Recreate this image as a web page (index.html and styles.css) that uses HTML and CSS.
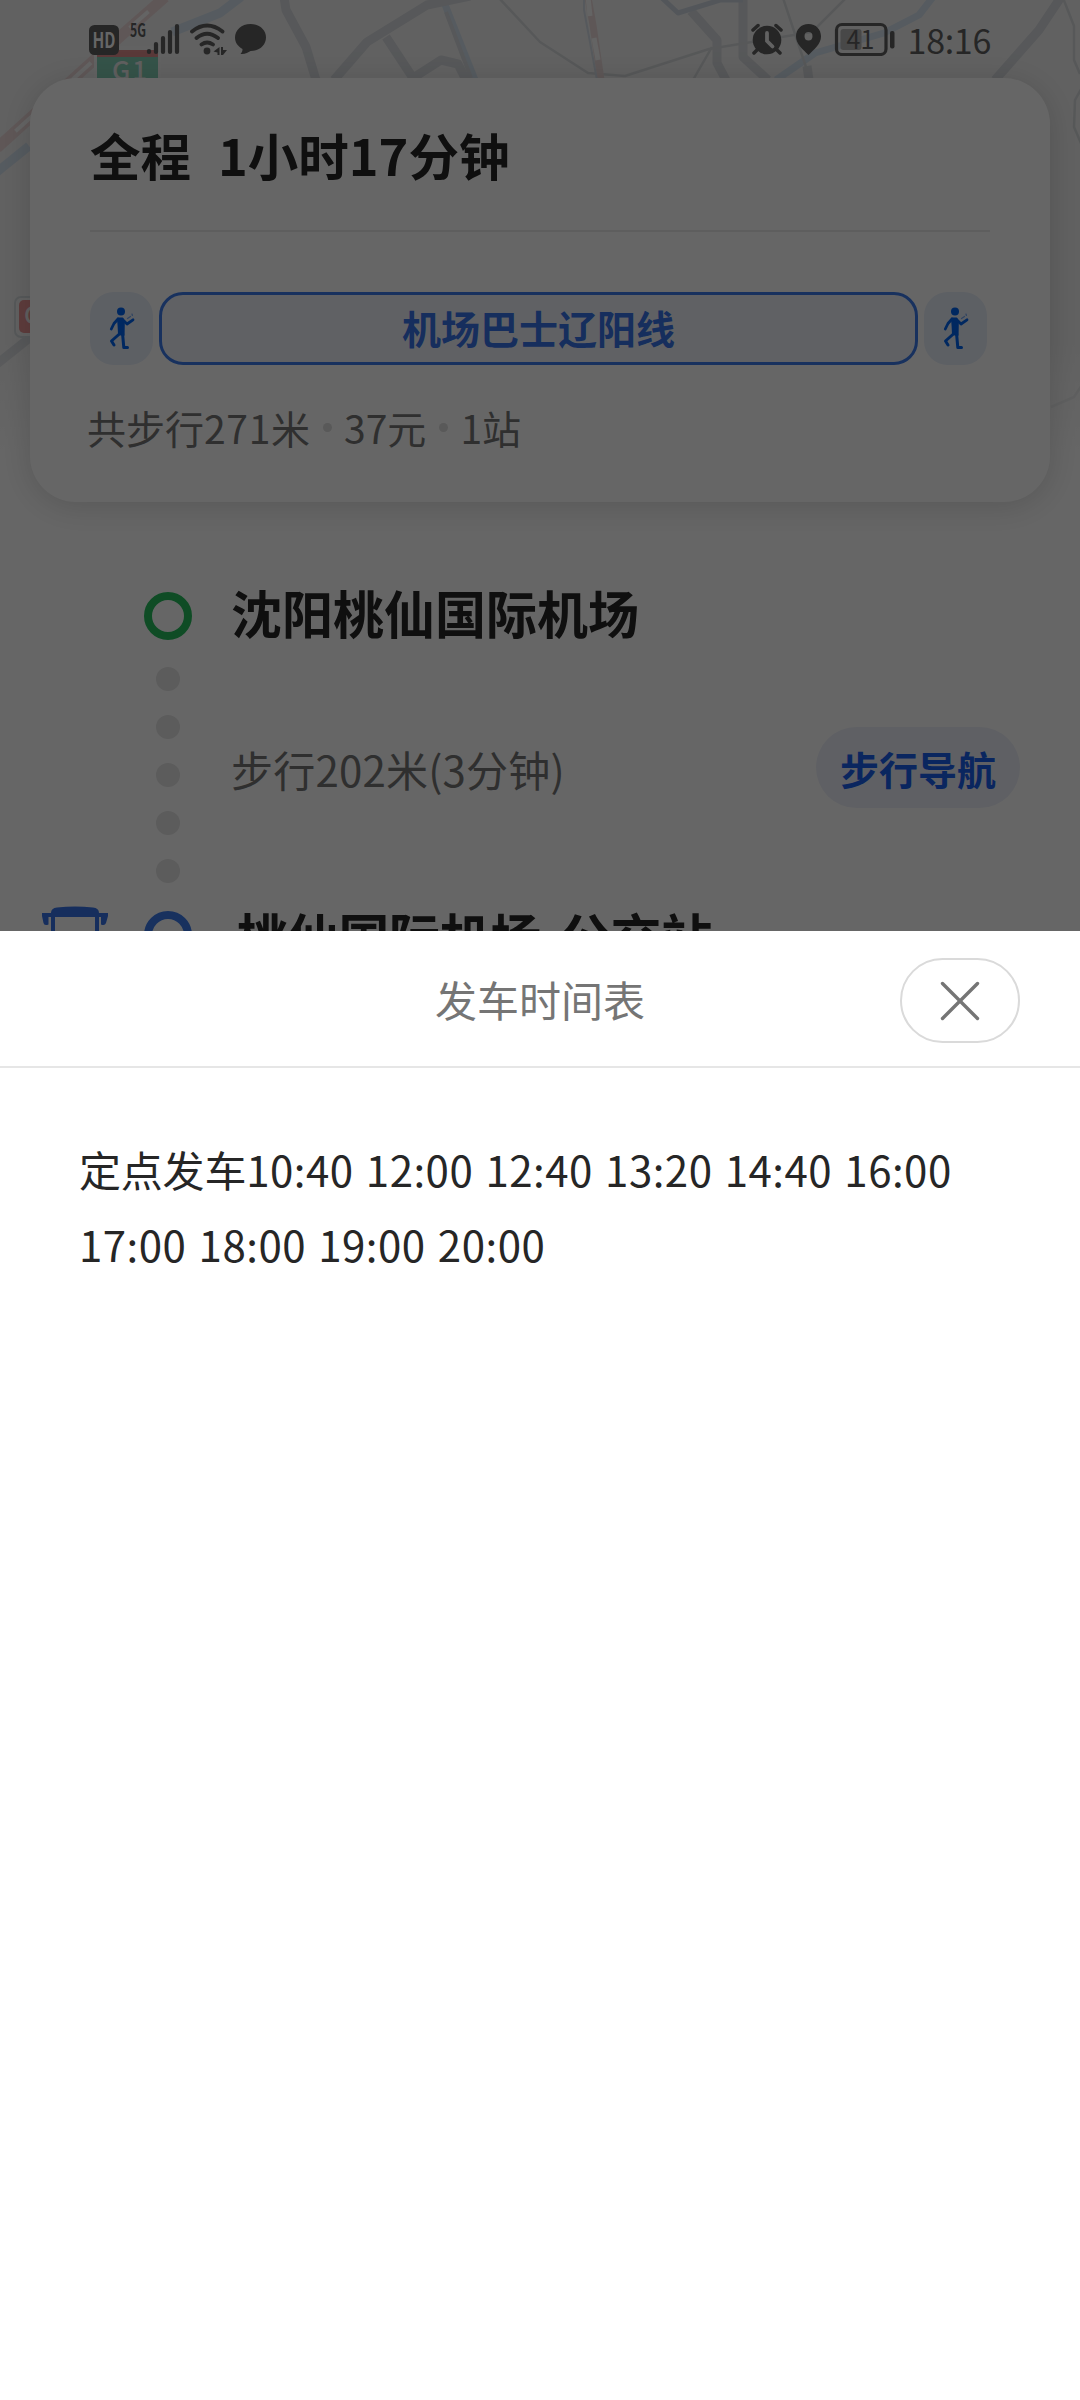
FILE: index.html
```html
<!DOCTYPE html>
<html lang="zh-CN">
<head>
<meta charset="utf-8">
<title>发车时间表</title>
<link rel="stylesheet" href="styles.css">
</head>
<body>
<svg width="0" height="0" class="defs">
  <symbol id="walk" viewBox="0 0 26 43">
    <g fill="currentColor" stroke="currentColor" stroke-linecap="round" stroke-linejoin="round">
      <circle cx="12" cy="4.600" r="4" stroke="none"/>
      <path d="M9 11.500L13.500 11.500L14.800 16L14.600 28L10 27L9.600 19Z" stroke-width="2"/>
      <path d="M9 12L5 16.500L2.300 22" fill="none" stroke-width="2.800"/>
      <path d="M13.500 12.500L18 17L24 12.800" fill="none" stroke-width="2.800"/>
      <path d="M11.500 26L2.500 34L5 38" fill="none" stroke-width="3"/>
      <path d="M13.500 26L14.800 40.500L18.500 40.500" fill="none" stroke-width="3"/>
      <path d="M18.500 11.500L21.500 9.500M23 7L23.400 8.500" fill="none" stroke-width="1.200" opacity=".5"/>
    </g>
  </symbol>
</svg>
<div class="screen">
  <svg class="map" width="1080" height="450" viewBox="0 0 1080 450" fill="none" stroke-linejoin="round">
    <defs>
      <linearGradient id="fade" x1="0" y1="0" x2="0" y2="1">
        <stop offset="0" stop-color="#fff" stop-opacity="0"/>
        <stop offset="1" stop-color="#fff"/>
      </linearGradient>
    </defs>
    <rect width="1080" height="450" fill="#f3f3f3"/>
    <g stroke="#d6e4f0">
      <path d="M241 -3L220 13L172 32M29 146L-3 172" stroke-width="9"/>
      <path d="M442 -3L475 80" stroke-width="7"/>
      <path d="M933 -3L919 15L884 33L815 53L776 80" stroke-width="7"/>
    </g>
    <g stroke="#d9dce0" stroke-width="9">
      <path d="M284 -3L286 10L306 47L316 80"/>
      <path d="M334 80L367 42L427 5L470 -4"/>
      <path d="M386 37L413 78L441 60L458 64L466 80"/>
      <path d="M446 12L471 78" stroke-width="4"/>
      <path d="M691 11L717 40V63L726 80"/>
      <path d="M743 -3V57L768 80"/>
      <path d="M1061 -3L1039 30L995 80"/>
      <path d="M807 66L809 80"/>
      <path d="M-3 364L32 336"/>
    </g>
    <path d="M662 -2L678 13L720 0L743 0" stroke="#cfd8e2" stroke-width="5"/>
    <g stroke="#d9dcde" stroke-width="2.500">
      <path d="M499 -2L540 42L588 73L625 76L709 49L812 32L846 -2"/>
      <path d="M693 80L712 47M783 -2L807 70M1063 -2L1074 26V60L1080 74M1084 84L1075 100L1074 127L1084 150M1051 407L1074 397L1084 382"/>
    </g>
    <g>
      <path d="M165 -3L124 33L83 70L-3 148" stroke="#eedada" stroke-width="11"/>
      <path d="M165 -3L124 33L83 70L-3 148" stroke="#fafafa" stroke-width="4" stroke-dasharray="25 52" stroke-dashoffset="-22"/>
      <path d="M588 -3L593 25L601 80" stroke="#eadada" stroke-width="7"/>
      <path d="M588 -3L590 16M594 38L598 60" stroke="#fafafa" stroke-width="5"/>
      <path d="M584 -3V10L597 80" stroke="#d7dfe8" stroke-width="2"/>
    </g>
    <rect x="94" y="46" width="67" height="40" fill="#f5f5f5"/>
    <rect x="97" y="50" width="61" height="8" fill="#e08e8e"/>
    <rect x="97" y="57" width="61" height="28" fill="#84d0b6"/>
    <text x="112" y="80" class="road-label" fill="#eee">G1</text>
    <rect x="15" y="297" width="40" height="40" rx="6" fill="#f4f4f4" stroke="#d7dde0" stroke-width="2"/>
    <rect x="19" y="300" width="34" height="33" rx="5" fill="#ea9696"/>
    <text x="24" y="324" class="road-label small" fill="#eee">G</text>
    <rect y="340" width="1080" height="110" fill="url(#fade)"/>
  </svg>

  <main class="page">
    <section class="card">
      <h1 class="total"><span>全程</span><span>1小时17分钟</span></h1>
      <div class="segments">
        <div class="walk-chip"><svg width="26" height="43"><use href="#walk"/></svg></div>
        <div class="bus-chip">机场巴士辽阳线</div>
        <div class="walk-chip"><svg width="26" height="43"><use href="#walk"/></svg></div>
      </div>
      <div class="summary"><span>共步行<b>271</b>米</span><i></i><span>37元</span><i></i><span>1站</span></div>
    </section>

    <section class="route">
      <div class="rail">
        <span class="node start"></span>
        <span class="dot"></span><span class="dot"></span><span class="dot"></span><span class="dot"></span><span class="dot"></span>
        <span class="node stop"></span>
      </div>
      <svg class="bus-icon" width="66" height="60" viewBox="0 0 66 60">
        <path d="M9 7Q9 2 15 1.500Q33 -.5 51 1.500Q57 2 57 7H66V10L64 17Q63 20 59 18.500V11H57V56H53V11H13V56H9V11H6.500V18.500Q2 20 1.500 17L0 10V7Z" fill="#3874e8"/>
      </svg>
      <div class="stops">
        <h2>沈阳桃仙国际机场</h2>
        <div class="walk-row">
          <span>步行202米(3分钟)</span>
          <button class="nav-btn">步行导航</button>
        </div>
        <h2 class="second">桃仙国际机场-公交站</h2>
      </div>
    </section>
  </main>

  <div class="mask"></div>

  <header class="status">
    <svg width="180" height="36" viewBox="0 0 180 36" fill="#262626">
      <rect x="0" y="5" width="30" height="30" rx="5.500"/>
      <text x="15" y="27.500" class="hd" text-anchor="middle" textLength="23" lengthAdjust="spacingAndGlyphs">HD</text>
      <text x="41" y="17" class="five-g" textLength="16" lengthAdjust="spacingAndGlyphs">5G</text>
      <g stroke="#262626" stroke-width="4.200" stroke-linecap="round" fill="none">
        <path d="M60 31V32M67 24V32M74 18V32M81 12V32M88 6V32"/>
        <path d="M103 11.500Q118 -.5 133.500 11.500M107.500 18Q118 9.500 129 18M112.500 24.500Q118 20.500 124 24.500" stroke-width="3.800"/>
      </g>
      <circle cx="118" cy="31" r="3.400"/>
      <path d="M124.500 31.500L130.500 27V35H128.500V32.500ZM132 27H134V30L138 30L134 35H132Z"/>
      <path d="M161.500 4C170.500 4 177 10 177 17.500C177 25 170.500 31 161.500 31C159 32.500 156 34.500 151.500 34C153 32.500 153.500 31 153.500 29C149 26.500 146 22.500 146 17.500C146 10 152.500 4 161.500 4Z"/>
    </svg>
    <div class="status-right">
      <svg width="145" height="36" viewBox="0 0 145 36" fill="#262626">
        <circle cx="16" cy="20" r="14.300"/>
        <path d="M2 10L7 5.500M25 5.500L30 10M6 30L3 33M26 30L29 33" stroke="#262626" stroke-width="3.500" stroke-linecap="round"/>
        <path d="M16 13V21L21.500 26.500" fill="none" stroke="#626262" stroke-width="3.800" stroke-linecap="round"/>
        <path fill-rule="evenodd" d="M57.500 4C65 4 70 9.500 70 16.500C70 24 63 29.500 57.500 35C52 29.500 45 24 45 16.500C45 9.500 50 4 57.500 4ZM57.500 12A4 4.200 0 1 0 57.500 20.400A4 4.200 0 1 0 57.500 12Z"/>
        <rect x="85.500" y="4.500" width="49.500" height="30" rx="5.500" fill="none" stroke="#262626" stroke-width="3.200"/>
        <rect x="89.500" y="9" width="21" height="21" rx="3" fill="#484848"/>
        <rect x="139" y="11" width="4.500" height="17.500" rx="2"/>
        <text x="95.500" y="29" class="battery">41</text>
      </svg>
      <time>18:16</time>
    </div>
  </header>

  <section class="sheet">
    <div class="sheet-head">
      <h3>发车时间表</h3>
      <button class="close" aria-label="关闭">
        <svg width="40" height="40" viewBox="0 0 40 40"><path d="M2.500 2.500L37.500 37.500M37.500 2.500L2.500 37.500" stroke="#757575" stroke-width="3.400" stroke-linecap="round"/></svg>
      </button>
    </div>
    <p class="times"><span>定点发车</span>10:40 12:00 12:40 13:20 14:40 16:00 17:00 18:00 19:00 20:00</p>
  </section>
</div>
</body>
</html>
```
FILE: styles.css
```css
* { box-sizing: border-box; margin: 0; padding: 0; }
body { background: #fff; font-family: "Noto Sans CJK SC", "Noto Sans", sans-serif; }
.defs { position: absolute; }
button { font: inherit; border: 0; }
.screen {
  position: relative;
  width: 1080px;
  height: 2400px;
  overflow: hidden;
  display: flex;
  flex-direction: column;
  background: #fff;
}
.map { position: absolute; top: 0; left: 0; }
.road-label { font-size: 26px; font-weight: 500; letter-spacing: 2px; }
.road-label.small { font-size: 24px; }
.page { position: relative; height: 931px; padding: 78px 30px 0; overflow: hidden; }

.card {
  height: 424px;
  padding: 0 60px;
  border-radius: 46px;
  background: #fff;
  box-shadow: 0 4px 32px rgba(0, 0, 0, .15);
}
.total {
  display: flex;
  gap: 27px;
  height: 154px;
  border-bottom: 2px solid #ececec;
  font-size: 50.5px;
  font-weight: 700;
  line-height: 152px;
  color: #262626;
}
.segments { display: flex; gap: 6px; height: 73px; margin-top: 60px; padding-right: 3px; }
.walk-chip {
  flex: none;
  display: flex;
  align-items: center;
  justify-content: center;
  width: 63px;
  border-radius: 24px;
  background: #e8effb;
  color: #0064f0;
}
.bus-chip {
  flex: 1;
  border: 3px solid #3c7cec;
  border-radius: 24px;
  background: #f1f3fb;
  color: #3874e8;
  font-size: 39px;
  font-weight: 700;
  line-height: 65px;
  text-align: center;
}
.summary {
  display: flex;
  align-items: center;
  gap: 12.5px;
  height: 60px;
  margin: 32px 0 0 -3px;
  font-size: 39px;
  color: #757575;
}
.summary b { font-weight: inherit; letter-spacing: .7px; }
.summary i { width: 9px; height: 9px; border-radius: 50%; background: #dedede; }

.route { position: relative; display: flex; padding: 90px 30px 0 114px; }
.rail { display: flex; flex-direction: column; align-items: center; gap: 24px; width: 48px; }
.node { width: 48px; height: 48px; border: 8px solid #26be5e; border-radius: 50%; }
.node.start { margin-bottom: 3px; }
.node.stop { margin-top: 4px; border-color: #3c7cec; }
.dot { width: 24px; height: 24px; border-radius: 50%; background: #e6e6e6; }
.bus-icon { position: absolute; left: 12px; top: 404px; }
.stops { flex: 1; padding: 0 0 0 39px; }
.stops h2 { height: 60px; margin-top: -10px; font-size: 51px; font-weight: 700; line-height: 60px; color: #262626; white-space: nowrap; }
.stops h2.second { margin: 97px 0 0 6px; letter-spacing: -.3px; }
.walk-row { display: flex; align-items: center; justify-content: space-between; height: 81px; margin-top: 85px; font-size: 42px; letter-spacing: .2px; line-height: 60px; color: #757575; }
.walk-row span { padding-top: 3px; }
.nav-btn {
  width: 204px;
  height: 81px;
  border-radius: 41px;
  background: #eef1fa;
  color: #1a60ee;
  font-size: 39px;
  font-weight: 700;
  line-height: 76px;
}

.mask { position: absolute; inset: 0; background: rgba(0, 0, 0, .6); }

.status {
  position: absolute;
  top: 20px;
  left: 89px;
  right: 89px;
  display: flex;
  justify-content: space-between;
  color: #262626;
}
.hd { fill: #666; font-size: 21px; font-weight: 700; }
.five-g { font-size: 18px; font-weight: 700; }
.battery { font-size: 25px; }
.status-right { display: flex; gap: 12px; }
.status-right time { font-size: 34px; line-height: 40px; letter-spacing: -.3px; }

.sheet { position: relative; flex: 1; background: #fff; }
.sheet-head {
  position: relative;
  display: flex;
  align-items: center;
  justify-content: center;
  height: 137px;
  border-bottom: 2px solid #e6e6e6;
}
.sheet-head h3 { font-size: 42px; font-weight: 400; line-height: 60px; color: #757575; }
.close {
  position: absolute;
  top: 27px;
  right: 60px;
  display: flex;
  align-items: center;
  justify-content: center;
  width: 120px;
  height: 85px;
  border: 2px solid #dadada;
  border-radius: 43px;
  background: #fff;
}
.times { padding: 63px 60px 0 79px; font-size: 42px; line-height: 75px; letter-spacing: .5px; word-spacing: 2.300px; color: #262626; }
.times span { letter-spacing: -.2px; }
```
